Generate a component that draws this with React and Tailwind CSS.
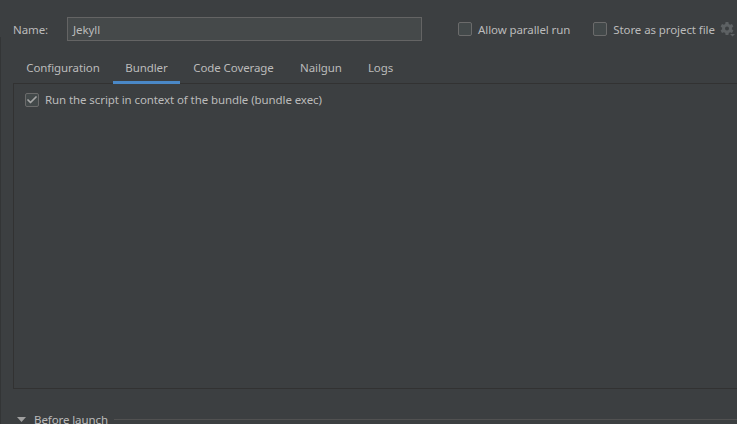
import { Check } from 'lucide-react'

const TABS = [
  { label: 'Configuration', width: 'w-[100px]' },
  { label: 'Bundler', width: 'w-[67px]' },
  { label: 'Code Coverage', width: 'w-[107px]' },
  { label: 'Nailgun', width: 'w-[68px]' },
  { label: 'Logs', width: 'w-[51px]' },
]

function Box({ checked }) {
  return (
    <span className="flex h-[14px] w-[14px] shrink-0 items-center justify-center rounded-[2px] border border-[#6b6b6b] bg-[#43494a]">
      {checked && <Check size={12} strokeWidth={3.5} className="text-[#a7a7a7]" />}
    </span>
  )
}

function GearIcon() {
  return (
    <svg width="16" height="16" viewBox="0 0 16 16" className="ml-[4px] shrink-0">
      <path
        fillRule="evenodd"
        fill="#5d6163"
        d="M6.6 1h2.800l.4 2 1.300.7 1.900-.7 1.400 2.400-1.500 1.400v1.400l1.500 1.400-1.400 2.400-1.900-.7-1.300.7-.4 2H6.600l-.4-2-1.300-.7-1.900.7L1.600 9.600l1.500-1.400V6.800L1.600 5.400 3 3l1.900.7 1.300-.7zM8 5.500a2 2 0 1 0 0 4 2 2 0 0 0 0-4z"
      />
      <path fill="#5d6163" d="M11 13h5l-2.500 2.500z" />
    </svg>
  )
}

export default function App() {
  return (
    <div className="relative flex h-[424px] w-[737px] flex-col overflow-hidden bg-[#3c3f41] pl-[13px] font-['Noto_Sans',sans-serif] text-[11.5px] tracking-[-0.09px] text-[#bbbbbb]">
      <div className="absolute bottom-0 left-0 top-[37px] w-px bg-[#333536]" />

      <div className="mt-[17px] flex h-[24px] shrink-0 items-center whitespace-nowrap">
        <span className="w-[54px] shrink-0 pt-px">Name:</span>
        <div className="flex h-[24px] w-[355px] shrink-0 items-center border border-[#646464] bg-[#45494a] pl-[5px] pt-px">Jekyll</div>
        <div className="ml-[36px] flex shrink-0 items-center gap-[6px]">
          <Box />
          <span className="pt-px">Allow parallel run</span>
        </div>
        <div className="ml-[23px] flex shrink-0 items-center gap-[6px]">
          <Box />
          <span className="pt-px">Store as project file</span>
        </div>
        <GearIcon />
      </div>

      <div className="relative z-10 mt-[14px] -mb-px flex h-[29px] shrink-0">
        {TABS.map(tab => (
          <div
            key={tab.label}
            className={`flex h-[29px] items-center justify-center border-b-[3px] pb-px ${tab.width} ${tab.label === 'Bundler' ? 'border-[#4a88c7]' : 'border-transparent'}`}
          >
            {tab.label}
          </div>
        ))}
      </div>

      <div className="-mr-px h-[306px] shrink-0 border border-[#323232] pl-[11px] pt-[7px]">
        <div className="flex items-center gap-[6px]">
          <Box checked />
          <span>Run the script in context of the bundle (bundle exec)</span>
        </div>
      </div>

      <div className="mt-[22px] flex items-center pl-[4px]">
        <svg width="9" height="5" viewBox="0 0 9 5" className="shrink-0">
          <path d="M0 0h9L4.500 5z" fill="#a0a0a0" />
        </svg>
        <span className="ml-[8px] whitespace-nowrap">Before launch</span>
        <div className="ml-[6px] h-px flex-1 bg-[#515151]" />
      </div>
    </div>
  )
}
